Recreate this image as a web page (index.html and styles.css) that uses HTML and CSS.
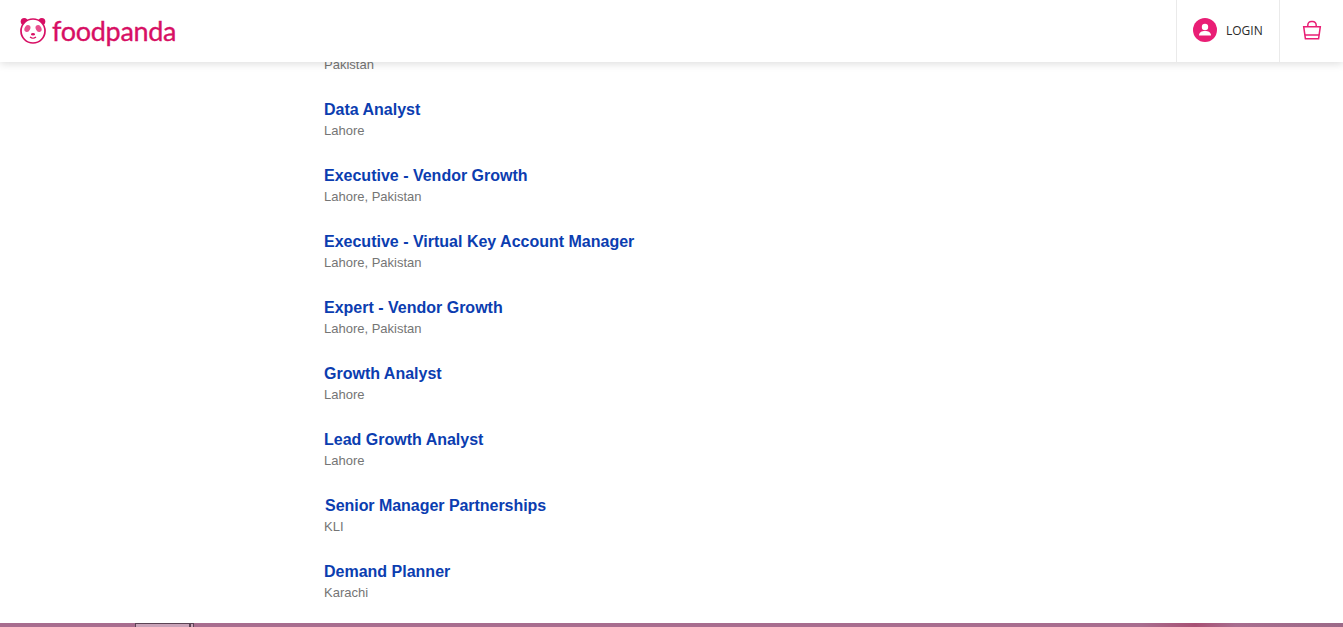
FILE: index.html
```html
<!DOCTYPE html>
<html lang="en">
<head>
<meta charset="utf-8">
<title>foodpanda careers</title>
<link rel="stylesheet" href="styles.css">
</head>
<body>
<header class="topbar">
  <a class="brand" href="#">
    <svg class="panda" viewBox="0 0 28 28" width="28" height="28" aria-hidden="true">
      <circle cx="5.200" cy="5.600" r="3.500" fill="#d70f64"/>
      <circle cx="22.800" cy="5.600" r="3.500" fill="#d70f64"/>
      <circle cx="14" cy="15" r="12" fill="#fff" stroke="#d70f64" stroke-width="1.700"/>
      <ellipse cx="8.400" cy="12.500" rx="2.800" ry="3.600" fill="#e8508f" transform="rotate(28 8.400 12.500)"/>
      <ellipse cx="19.600" cy="12.500" rx="2.800" ry="3.600" fill="#e8508f" transform="rotate(-28 19.600 12.500)"/>
      <ellipse cx="14" cy="18.200" rx="2" ry="1.200" fill="#d70f64"/>
      <path d="M11 21c1.800 1.500 4.200 1.500 6 0" fill="none" stroke="#d70f64" stroke-width="1.200"/>
    </svg>
    <span class="wordmark">foodpanda</span>
  </a>
  <nav class="actions">
    <a class="login" href="#">
      <svg class="avatar" viewBox="0 0 24 24" width="24" height="24" aria-hidden="true">
        <circle cx="12" cy="12" r="12" fill="#e91e75"/>
        <circle cx="12" cy="9" r="3.200" fill="#fff"/>
        <path d="M6 17.500c0-3 2.700-4.400 6-4.400s6 1.400 6 4.400z" fill="#fff"/>
      </svg>
      <span>LOGIN</span>
    </a>
    <a class="cart" href="#">
      <svg viewBox="0 0 20 20" width="20" height="20" aria-hidden="true" fill="none" stroke="#e91e75" stroke-width="1.500">
        <path d="M1.700 6.700h16.600l-1.700 12H3.400z"/>
        <path d="M5.800 6.700V5.200A3.500 3.700 0 0 1 9.300 1.500h1.400a3.500 3.700 0 0 1 3.500 3.700v1.500"/>
        <path d="M3 15h14"/>
      </svg>
    </a>
  </nav>
</header>
<main class="jobs">
  <div class="job clipped"><p class="place">Pakistan</p></div>
  <div class="job"><a class="title" href="#">Data Analyst</a><p class="place">Lahore</p></div>
  <div class="job"><a class="title" href="#">Executive - Vendor Growth</a><p class="place">Lahore, Pakistan</p></div>
  <div class="job"><a class="title" href="#">Executive - Virtual Key Account Manager</a><p class="place">Lahore, Pakistan</p></div>
  <div class="job"><a class="title" href="#">Expert - Vendor Growth</a><p class="place">Lahore, Pakistan</p></div>
  <div class="job"><a class="title" href="#">Growth Analyst</a><p class="place">Lahore</p></div>
  <div class="job"><a class="title" href="#">Lead Growth Analyst</a><p class="place">Lahore</p></div>
  <div class="job"><a class="title nudged" href="#">Senior Manager Partnerships</a><p class="place">KLI</p></div>
  <div class="job"><a class="title" href="#">Demand Planner</a><p class="place">Karachi</p></div>
</main>
<div class="strip"><span class="thumb"></span><span class="thumb-end"></span></div>
</body>
</html>
```
FILE: styles.css
```css
* { box-sizing: border-box; }
html, body { margin: 0; height: 100%; overflow: hidden; }
body { background: #fff; font-family: "Liberation Sans", Arial, sans-serif; position: relative; }

.topbar {
  position: absolute; top: 0; left: 0; right: 0; height: 62px;
  background: #fff; box-shadow: 0 2px 8px rgba(0,0,0,.13);
  display: flex; justify-content: space-between; z-index: 2;
}
.brand { display: flex; align-items: center; gap: 5px; padding: 0 0 2px 19px; text-decoration: none; }
.panda { display: block; }
.wordmark { font-family: Lato, sans-serif; font-size: 27px; color: #d70f64; line-height: 1; letter-spacing: -.3px; -webkit-text-stroke: .35px #d70f64; }
.actions { display: flex; }
.login {
  display: flex; align-items: center; gap: 9px; width: 104px; padding: 0 0 2px 16px;
  border-left: 1px solid #eaeaea; border-right: 1px solid #eaeaea;
  font-family: "Open Sans", sans-serif; font-size: 12px; color: #2a2a2a; text-decoration: none;
}
.cart { display: flex; align-items: center; justify-content: center; width: 63px; padding: 0 0 2px 1px; }

.jobs { padding: 25px 0 0 324px; }
.job { height: 66px; padding-top: 10px; }
.job.clipped { height: 64px; padding-top: 30px; }
.title { display: block; font-size: 16px; line-height: 22px; font-weight: 700; color: #0b3db0; text-decoration: none; }
.nudged { margin-left: 1px; letter-spacing: -.04px; }
.place { margin: 0; font-size: 13px; line-height: 20px; color: #757575; }

.strip {
  position: absolute; left: 0; right: 0; bottom: 0; height: 4px;
  background: linear-gradient(90deg, #a86d8f 0 85%, #a85074 89%, #a86d8f 92%, #9c6a88 100%);
}
.thumb { position: absolute; left: 135px; top: 0; width: 55px; height: 4px; background: #c9a3b8; border: 1px solid #5c4455; border-bottom: 0; }
.thumb-end { position: absolute; left: 190px; top: 0; width: 4px; height: 4px; background: #c9a3b8; border: 1px solid #5c4455; border-bottom: 0; }
```
